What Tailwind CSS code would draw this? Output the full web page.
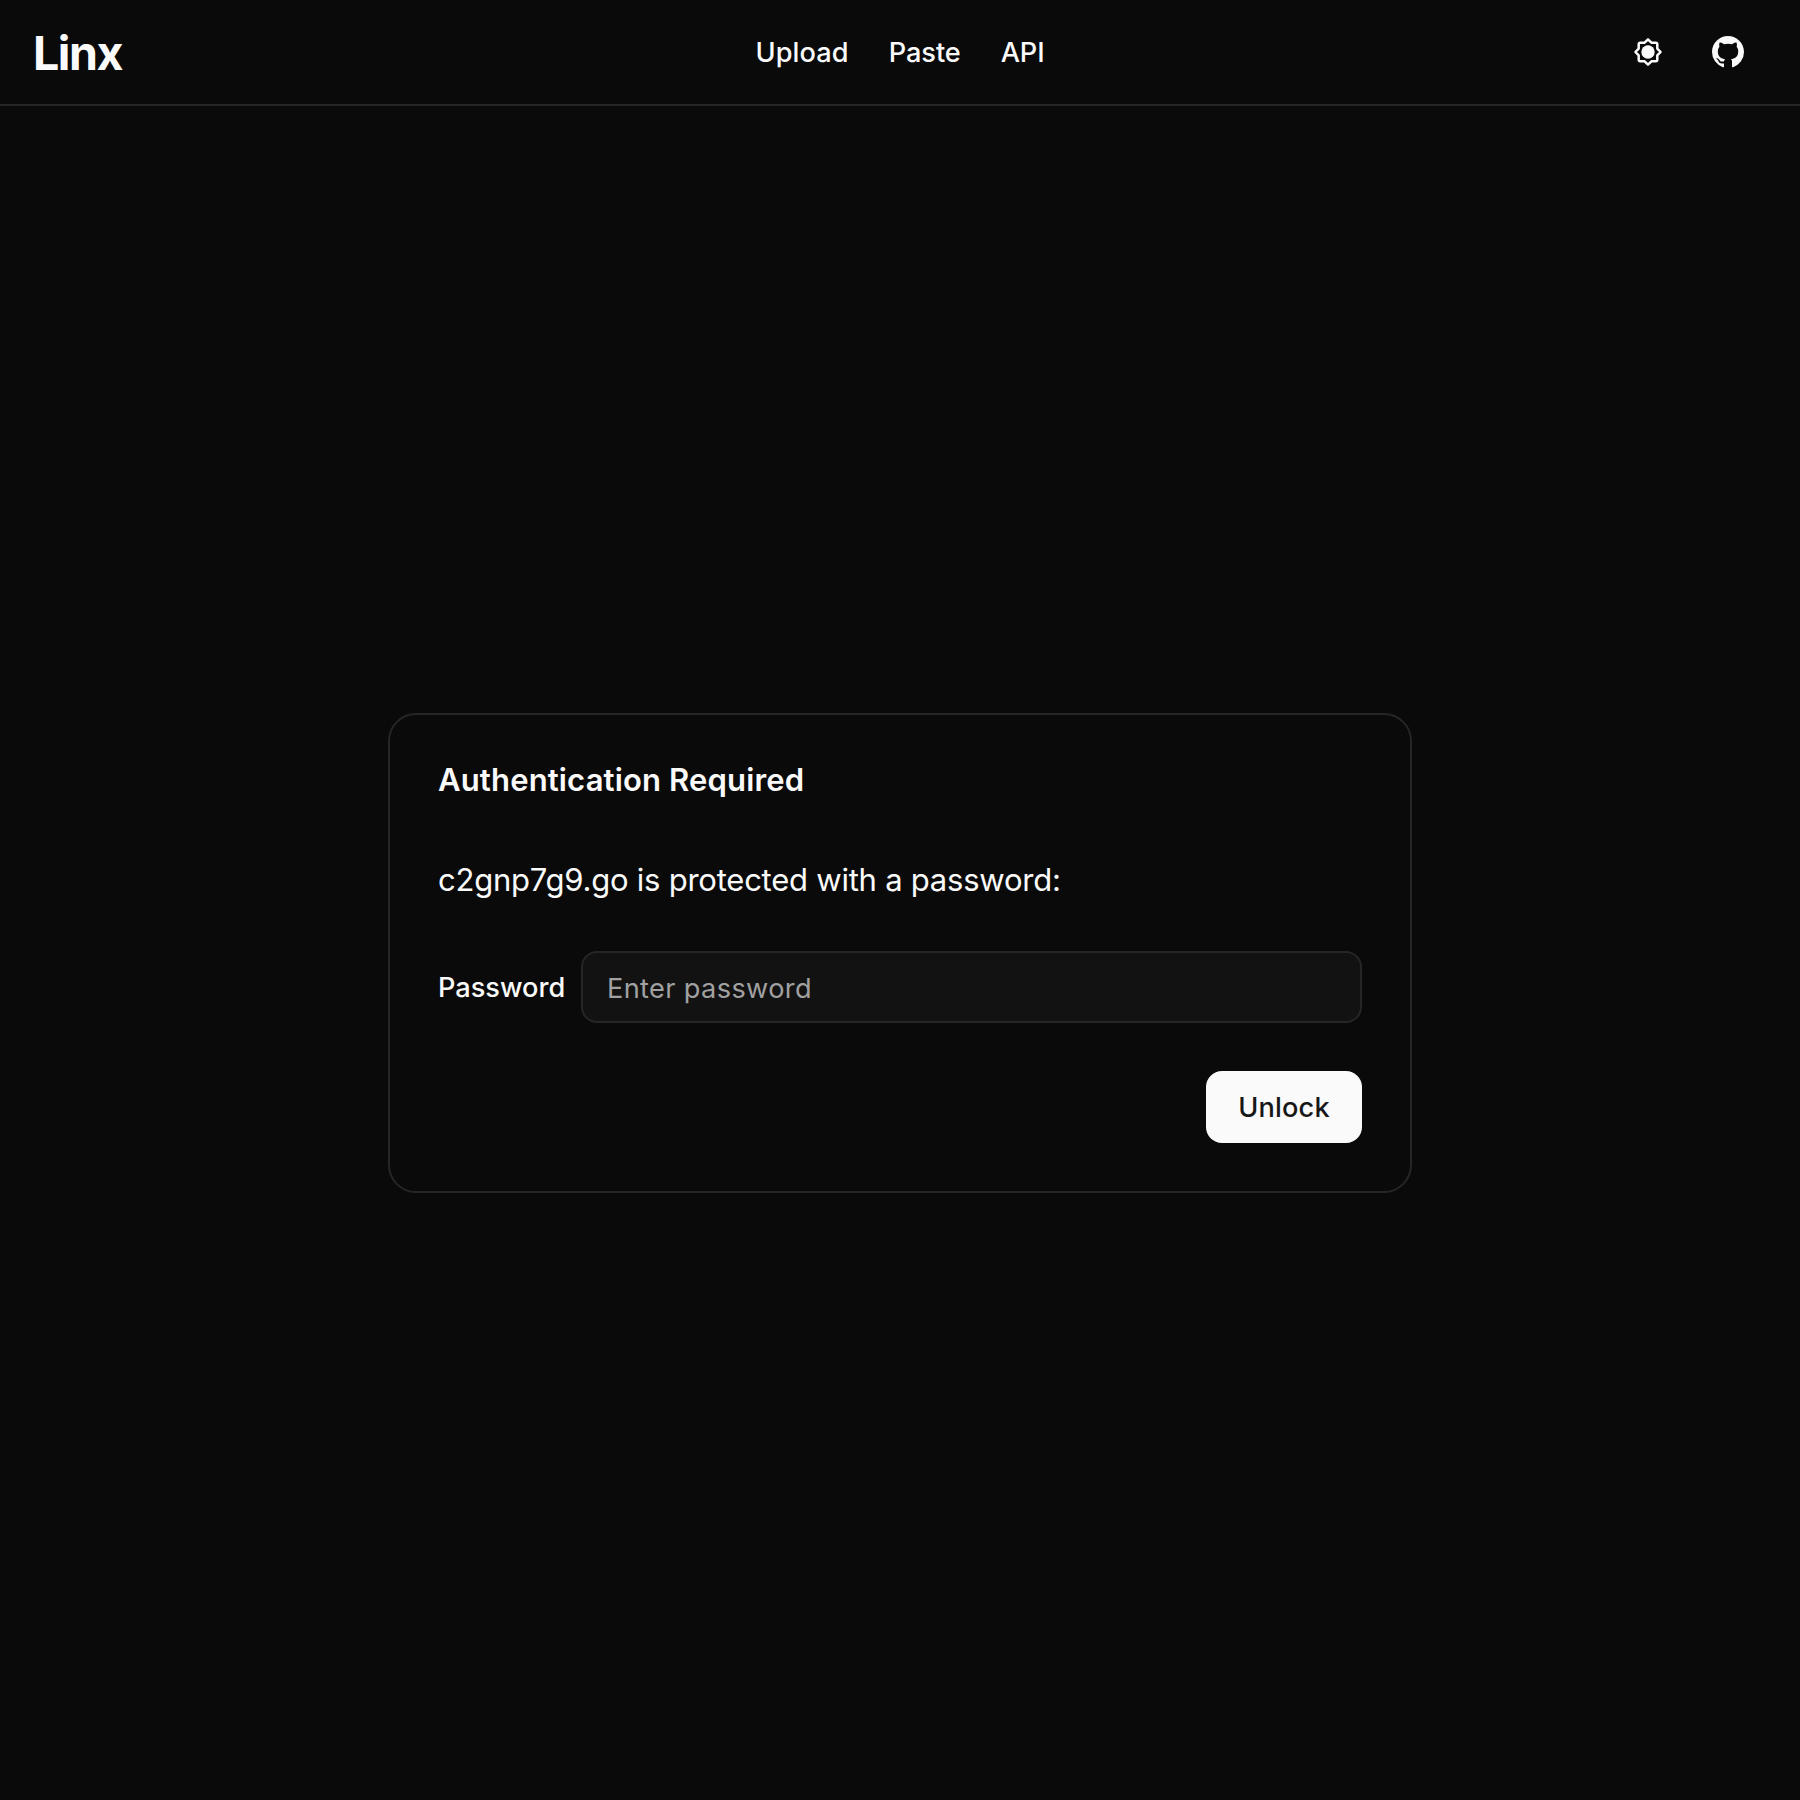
<!DOCTYPE html>
<html lang="en">
<head>
<meta charset="utf-8">
<title>Linx</title>
<script src="https://cdn.jsdelivr.net/npm/@tailwindcss/browser@4"></script>
</head>
<body class="flex min-h-screen flex-col bg-neutral-950 font-['Inter',sans-serif] text-neutral-50">
  <header class="grid h-[106px] grid-cols-3 items-center border-b-2 border-[#262626] px-8">
    <a class="pt-0.5 pl-px text-[46.56px] leading-[48px] font-bold tracking-[-1.5px]">Linx</a>
    <nav class="flex justify-center gap-10 pt-0.5 text-[27.16px] leading-10 font-medium">
      <a class="tracking-[0.1px]">Upload</a>
      <a class="tracking-[-0.05px]">Paste</a>
      <a class="tracking-[-0.1px]">API</a>
    </nav>
    <div class="flex items-center justify-end gap-12 pr-6">
      <button aria-label="Toggle theme" class="size-8">
        <svg viewBox="-16 -16 32 32" class="size-8" fill="none" stroke="currentColor" stroke-width="2.5" stroke-linejoin="round">
          <path d="M0-12.6 3.4-9.3H7.8Q9.3-9.3 9.3-7.8V-3.4L12.6 0 9.3 3.4V7.8Q9.3 9.3 7.8 9.3H3.4L0 12.6-3.4 9.3H-7.8Q-9.3 9.3-9.3 7.8V3.4L-12.6 0-9.3-3.4V-7.8Q-9.3-9.3-7.8-9.3H-3.4z"/>
          <circle r="6.7" fill="currentColor" stroke="none"/>
        </svg>
      </button>
      <a aria-label="GitHub" class="size-8">
        <svg viewBox="0 0 16 16" class="size-8" fill="currentColor">
          <path d="M8 0c4.42 0 8 3.58 8 8a8.013 8.013 0 0 1-5.45 7.59c-.4.08-.55-.17-.55-.38 0-.27.01-1.13.01-2.2 0-.75-.25-1.23-.54-1.48 1.78-.2 3.65-.88 3.65-3.95 0-.88-.31-1.59-.82-2.15.08-.2.36-1.02-.08-2.12 0 0-.67-.22-2.2.82-.64-.18-1.32-.27-2-.27-.68 0-1.36.09-2 .27-1.53-1.03-2.2-.82-2.2-.82-.44 1.1-.16 1.92-.08 2.12-.51.56-.82 1.28-.82 2.15 0 3.06 1.86 3.75 3.64 3.95-.23.2-.44.55-.51 1.07-.46.21-1.61.55-2.33-.66-.15-.24-.6-.83-1.23-.82-.67.01-.27.38.01.53.34.19.73.9.82 1.13.16.45.68 1.31 2.69.94 0 .67.01 1.3.01 1.49 0 .21-.15.45-.55.38A7.995 7.995 0 0 1 0 8c0-4.42 3.58-8 8-8Z"/>
        </svg>
      </a>
    </div>
  </header>
  <main class="flex flex-1 items-center justify-center">
    <section class="flex w-[1024px] flex-col rounded-[28px] border-2 border-[#262626] p-12">
      <h1 class="pt-px text-[31.04px] leading-8 font-semibold tracking-[0.14px]">Authentication Required</h1>
      <p class="mt-[60px] text-[31.04px] leading-[48px] tracking-[-0.25px]">c2gnp7g9.go is protected with a password:</p>
      <form class="mt-[47px] flex flex-col gap-12">
        <div class="flex items-center gap-4">
          <label for="password" class="w-[127px] pt-0.5 text-[27.16px] leading-10 font-medium">Password</label>
          <input id="password" type="password" placeholder="Enter password" class="h-[72px] min-w-0 flex-1 rounded-2xl border-2 border-[#262626] bg-[#121212] px-6 pt-0.5 text-[27.16px] tracking-[0.36px] placeholder:text-[#a1a1a1]">
        </div>
        <button type="button" class="h-[72px] w-[156px] self-end rounded-2xl bg-neutral-50 pt-0.5 text-[27.16px] leading-10 font-medium tracking-[0.2px] text-neutral-900">Unlock</button>
      </form>
    </section>
  </main>
</body>
</html>
